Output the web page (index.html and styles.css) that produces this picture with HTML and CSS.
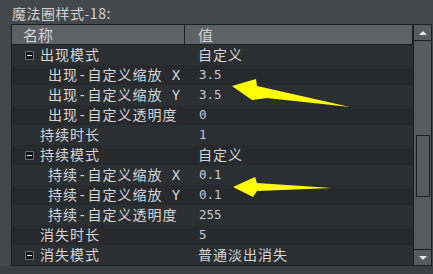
FILE: index.html
```html
<!DOCTYPE html>
<html lang="zh">
<head>
  <meta charset="UTF-8" />
  <title>魔法圈样式-18</title>
  <link rel="stylesheet" href="styles.css">
</head>
<body>
  <div class="panel">
    <div class="title">魔法圈样式-18:</div>

    <div class="grid-box">
      <div class="table">
        <div class="head">
          <div class="hcell name">名称</div>
          <div class="hcell value">值</div>
        </div>

        <div class="row">
          <div class="cell name lv1"><span class="fold"></span>出现模式</div>
          <div class="cell value">自定义</div>
        </div>
        <div class="row">
          <div class="cell name lv2">出现-自定义缩放 X</div>
          <div class="cell value num">3.5</div>
        </div>
        <div class="row">
          <div class="cell name lv2">出现-自定义缩放 Y</div>
          <div class="cell value num">3.5</div>
        </div>
        <div class="row">
          <div class="cell name lv2">出现-自定义透明度</div>
          <div class="cell value num">0</div>
        </div>
        <div class="row">
          <div class="cell name lv1 plain">持续时长</div>
          <div class="cell value num">1</div>
        </div>
        <div class="row">
          <div class="cell name lv1"><span class="fold"></span>持续模式</div>
          <div class="cell value">自定义</div>
        </div>
        <div class="row">
          <div class="cell name lv2">持续-自定义缩放 X</div>
          <div class="cell value num">0.1</div>
        </div>
        <div class="row">
          <div class="cell name lv2">持续-自定义缩放 Y</div>
          <div class="cell value num">0.1</div>
        </div>
        <div class="row">
          <div class="cell name lv2">持续-自定义透明度</div>
          <div class="cell value num">255</div>
        </div>
        <div class="row">
          <div class="cell name lv1 plain">消失时长</div>
          <div class="cell value num">5</div>
        </div>
        <div class="row">
          <div class="cell name lv1"><span class="fold"></span>消失模式</div>
          <div class="cell value">普通淡出消失</div>
        </div>
      </div>

      <div class="scrollbar">
        <div class="sb-btn up"></div>
        <div class="sb-track"><div class="sb-thumb"></div></div>
        <div class="sb-btn down"></div>
      </div>
    </div>
  </div>

  <!-- annotation arrows -->
  <svg class="marks" width="433" height="274" viewBox="0 0 433 274">
    <polygon points="232,86 256,79 257,86 350,107 267,98 252,100" fill="#ffff00"/>
    <polygon points="233,187 255,177 257,183 332,188 257,191 253,197" fill="#ffff00"/>
  </svg>
</body>
</html>
```

FILE: styles.css
```css
:root {
  --bg: #45484b;
  --bg-low: #3c3f42;
  --line: #1c1e20;
  --head: #5e6265;
  --row-a: #2c2f32;
  --row-b: #27292c;
  --text: #d6d6d6;
  --num: #c3cbd3;
  --track: #575b5e;
  --cjk: 'Noto Sans CJK SC', sans-serif;
  --mono: 'DejaVu Sans Mono', 'Noto Sans CJK SC', monospace;
}
* { margin:0; padding:0; box-sizing:border-box; }
html, body { width:433px; height:274px; overflow:hidden; }
body {
  position:relative;
  background: linear-gradient(var(--bg) 0, var(--bg) 266px, var(--bg-low) 266px);
  color:var(--text); font-family:var(--mono);
}

/* TITLE */
.panel { padding-left:11px; }
.title {
  height:24px; padding-top:5px;
  font-family:var(--cjk); font-size:14px; line-height:17px;
  letter-spacing:.5px; color:#d2d2d2; padding-left:1px;
}

/* TABLE BOX */
.grid-box {
  display:flex; width:421px; height:242px;
  border:1px solid var(--line);
}
.table { width:401px; display:flex; flex-direction:column; }

.head {
  display:flex; height:20px; background:var(--head);
  border-bottom:1px solid var(--line); border-right:1px solid var(--line);
}
.hcell {
  font-family:var(--cjk); font-size:15px; line-height:19px; color:#d4d4d4;
}
.hcell.name { width:173px; padding-left:11px; border-right:1px solid var(--line); }
.hcell.value { flex:1; padding-left:13px; }

.row { display:flex; height:20px; background:var(--row-a); }
.row:nth-child(odd) { background:var(--row-b); }
.cell {
  font-size:14px; line-height:20px; letter-spacing:1px; white-space:nowrap;
  display:flex; align-items:center;
}
.cell.name { width:173px; }
.cell.value { flex:1; padding-left:13px; }
.cell.num { font-size:12.5px; letter-spacing:0; color:var(--num); padding-left:14px; }

.lv1 { padding-left:13px; }
.lv1.plain { padding-left:28px; }
.lv2 { padding-left:36px; }

/* fold box */
.fold {
  width:9px; height:9px; margin-right:6px; margin-top:1px;
  background:#151617; border:1px solid #6c6f72; border-radius:1px;
  display:flex; align-items:center; justify-content:center;
}
.fold::after { content:''; width:5px; height:1px; background:#e6e6e6; }

/* SCROLLBAR */
.scrollbar { width:18px; display:flex; flex-direction:column; border-left:1px solid var(--line); }
.sb-btn {
  height:16px; background:var(--track);
  display:flex; align-items:center; justify-content:center;
}
.sb-btn.up { border-bottom:1px solid var(--line); height:16px; }
.sb-btn.down { border-top:1px solid var(--line); }
.sb-btn.up::after {
  content:''; border-left:4px solid transparent; border-right:4px solid transparent;
  border-bottom:4px solid #e8e8e8;
}
.sb-btn.down::after {
  content:''; border-left:4px solid transparent; border-right:4px solid transparent;
  border-top:4px solid #e8e8e8;
}
.sb-track { flex:1; background:var(--track); padding:94px 1px 0 2px; }
.sb-thumb { height:62px; background:var(--track); border:1px solid var(--line); }

/* ARROWS */
.marks { position:absolute; top:0; left:0; pointer-events:none; }
```
